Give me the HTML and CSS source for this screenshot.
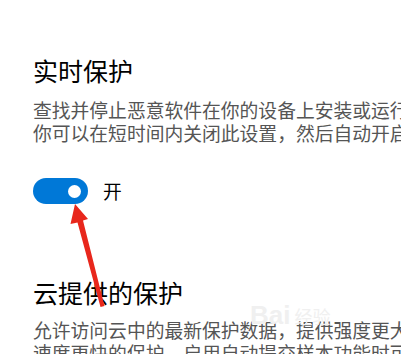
FILE: index.html
```html
<!DOCTYPE html>
<html lang="zh-CN">
<head>
<meta charset="utf-8">
<link rel="stylesheet" href="styles.css">
</head>
<body>
<main class="page">
  <section class="group">
    <h2 class="title">实时保护</h2>
    <p class="desc">
      <span class="line">查找并停止恶意软件在你的设备上安装或运行。</span>
      <span class="line">你可以在短时间内关闭此设置，然后自动开启。</span>
    </p>
    <div class="switch-row">
      <span class="switch"><span class="knob"></span></span>
      <span class="switch-label">开</span>
    </div>
  </section>
  <section class="group group-cloud">
    <h2 class="title">云提供的保护</h2>
    <p class="desc desc-cloud">
      <span class="line">允许访问云中的最新保护数据，提供强度更大、</span>
      <span class="line">速度更快的保护。启用自动提交样本功能时可获得最佳效果。</span>
    </p>
  </section>
</main>
<div class="watermark"><span class="wm-bai">Bai</span><span class="wm-jy">经验</span></div>
<svg class="arrow" width="401" height="354" viewBox="0 0 401 354" aria-hidden="true">
  <polygon points="75,204 88,219 83,220.5 104.5,306 100.5,307 77.5,222.5 70.5,224" fill="#e8271c"/>
</svg>
</body>
</html>
```

FILE: styles.css
```css
html, body {
  margin: 0;
  padding: 0;
  background: #ffffff;
  overflow: hidden;
}
body {
  width: 401px;
  height: 354px;
  position: relative;
  font-family: "Noto Sans CJK SC", "Noto Sans", sans-serif;
}
.page {
  padding: 54px 0 0 33px;
}
.group {
  margin: 0;
}
.title {
  margin: 0;
  font-size: 25px;
  line-height: 32px;
  font-weight: 400;
  color: #000000;
  white-space: nowrap;
}
.desc {
  margin: 12px 0 0 0;
  font-size: 18.8px;
  line-height: 23px;
  color: #555555;
  white-space: nowrap;
}
.desc-cloud {
  margin-top: 10px;
}
.line {
  display: block;
}
.switch-row {
  display: flex;
  align-items: center;
  gap: 15px;
  margin-top: 34px;
}
.switch {
  width: 55px;
  height: 26px;
  border-radius: 13px;
  background: #0078d7;
  display: flex;
  align-items: center;
  justify-content: flex-end;
  padding-right: 7px;
  box-sizing: border-box;
}
.knob {
  width: 13px;
  height: 13px;
  border-radius: 50%;
  background: #ffffff;
}
.switch-label {
  font-size: 18.8px;
  line-height: 26px;
  color: #000000;
}
.group-cloud {
  margin-top: 72px;
}
.watermark {
  position: absolute;
  left: 250px;
  top: 300px;
  display: flex;
  align-items: baseline;
  gap: 4px;
  color: #f0f0f0;
  pointer-events: none;
}
.wm-bai {
  font-family: "Liberation Sans", sans-serif;
  font-size: 26px;
  font-weight: 700;
}
.wm-jy {
  font-size: 18px;
}
.arrow {
  position: absolute;
  left: 0;
  top: 0;
}
```
